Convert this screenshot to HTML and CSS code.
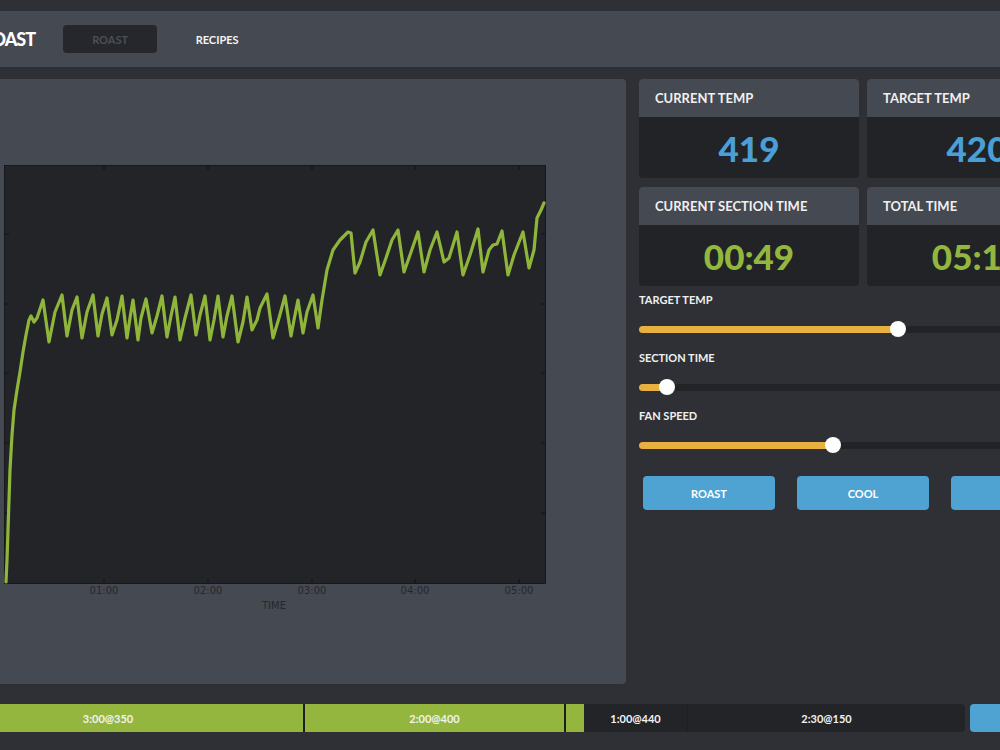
FILE: index.html
```html
<!DOCTYPE html>
<html lang="en">
  <head>
    <meta charset="UTF-8" />
    <meta name="viewport" content="width=device-width, initial-scale=1.0" />
    <title>Roast</title>
    <link rel="stylesheet" href="styles.css">
  </head>
  <body>
    <div class="app">
      <header class="topbar">
        <div class="logo">ROAST</div>
        <nav class="tabs">
          <a class="tab active">ROAST</a>
          <a class="tab">RECIPES</a>
        </nav>
      </header>

      <main class="main">
        <section class="chart-panel">
          <svg class="chart" width="542" height="450" viewBox="4 165 542 450">
            <rect class="plot-bg" x="4.5" y="165.5" width="541" height="418" />
            <path class="ticks" d="M104 166v4M208 166v4M312 166v4M415 166v4M519 166v4
              M104 583v-4M208 583v-4M312 583v-4M415 583v-4M519 583v-4
              M5 234h4M5 304h4M5 373h4M5 443h4M5 513h4
              M545 234h-4M545 304h-4M545 373h-4M545 443h-4M545 513h-4" />
            <polyline class="series" points="6,582 7,560 8,530 9,500 10,470 12,435 14,410 17,390 20,372 23,352 26,335 29,320 31,316 34,322 37,318 43,300 49,342 55,312 62,295 67,336 72,310 77,297 82,338 87,312 93,295 98,336 102,314 107,298 112,335 117,320 122,296 127,338 130,318 133,300 138,340 141,318 146,299 152,333 157,316 162,296 167,337 171,316 175,297 180,340 185,318 191,295 196,335 200,315 205,296 210,340 214,320 218,296 223,337 227,316 232,296 238,342 243,322 247,297 252,330 257,320 260,308 267,294 273,338 279,318 285,296 291,336 294,320 298,300 303,333 307,312 313,295 318,328 322,300 327,270 333,250 340,240 348,232 351,233 355,273 360,262 366,242 373,230 380,275 386,258 392,240 398,230 404,272 410,255 418,232 424,272 430,250 437,232 444,262 449,258 457,232 463,275 470,255 478,229 483,272 489,250 493,245 497,244 502,231 508,275 514,255 523,232 529,268 534,250 537,218 541,210 544,203" />
            <g class="tick-labels">
              <text x="104" y="594">01:00</text>
              <text x="208" y="594">02:00</text>
              <text x="312" y="594">03:00</text>
              <text x="415" y="594">04:00</text>
              <text x="519" y="594">05:00</text>
            </g>
            <text class="axis-title" x="274" y="609">TIME</text>
          </svg>
        </section>

        <aside class="controls">
          <div class="stats">
            <div class="stat">
              <div class="stat-label">CURRENT TEMP</div>
              <div class="stat-value temp">419</div>
            </div>
            <div class="stat">
              <div class="stat-label">TARGET TEMP</div>
              <div class="stat-value temp">420</div>
            </div>
            <div class="stat">
              <div class="stat-label">CURRENT SECTION TIME</div>
              <div class="stat-value time">00:49</div>
            </div>
            <div class="stat">
              <div class="stat-label">TOTAL TIME</div>
              <div class="stat-value time">05:12</div>
            </div>
          </div>

          <div class="sliders">
            <div class="slider">
              <div class="slider-label">TARGET TEMP</div>
              <div class="track" style="--value: 57.8%">
                <div class="rail"><div class="fill"></div></div>
                <div class="thumb"></div>
              </div>
            </div>
            <div class="slider">
              <div class="slider-label">SECTION TIME</div>
              <div class="track" style="--value: 6.3%">
                <div class="rail"><div class="fill"></div></div>
                <div class="thumb"></div>
              </div>
            </div>
            <div class="slider">
              <div class="slider-label">FAN SPEED</div>
              <div class="track" style="--value: 43.3%">
                <div class="rail"><div class="fill"></div></div>
                <div class="thumb"></div>
              </div>
            </div>
          </div>

          <div class="actions">
            <button class="btn">ROAST</button>
            <button class="btn">COOL</button>
            <button class="btn">STOP</button>
          </div>
        </aside>
      </main>

      <footer class="timeline-row">
        <div class="timeline">
          <div class="segment done" style="width: 390px">3:00@350</div>
          <div class="segment done" style="width: 261px">2:00@400</div>
          <div class="segment current" style="width: 123px">
            <span class="progress"></span>
            <span class="segment-label">1:00@440</span>
          </div>
          <div class="segment thin" style="width: 278px">2:30@150</div>
        </div>
        <button class="next-btn"></button>
      </footer>
    </div>
  </body>
</html>
```

FILE: styles.css
```css
* {
  box-sizing: border-box;
  margin: 0;
  padding: 0;
}

body {
  width: 1000px;
  height: 750px;
  overflow: hidden;
  background: #2e3035;
  font-family: Lato, "Open Sans", sans-serif;
  color: #f2f2f2;
}

.app {
  width: 1150px;
  margin-left: -48px;
  padding-top: 11px;
}

/* header */
.topbar {
  height: 56px;
  background: #454952;
  display: flex;
  align-items: center;
  padding-left: 29px;
}

.logo {
  flex: none;
  font-size: 18px;
  font-weight: 900;
  letter-spacing: -1px;
  color: #fff;
}

.tabs {
  display: flex;
  gap: 13px;
  margin-left: 28px;
}

.tab {
  width: 94px;
  height: 28px;
  display: flex;
  align-items: center;
  justify-content: center;
  font-size: 11px;
  font-weight: 700;
  color: #f4f4f4;
  border-radius: 4px;
}

.tab.active {
  background: #25272c;
  color: #4c4f57;
}

/* main area */
.main {
  display: flex;
  gap: 13px;
  margin-top: 12px;
  height: 605px;
}

.chart-panel {
  width: 674px;
  background: #454952;
  border-radius: 0 4px 4px 0;
  padding: 86px 0 0 52px;
}

.chart {
  display: block;
}

.plot-bg {
  fill: #232428;
  stroke: #17181b;
  stroke-width: 1;
}

.ticks {
  stroke: #101113;
  stroke-width: 1;
  fill: none;
}

.series {
  fill: none;
  stroke: #8fb63b;
  stroke-width: 3.2;
  stroke-linejoin: round;
  stroke-linecap: round;
}

.tick-labels text,
.axis-title {
  font-family: "DejaVu Sans", sans-serif;
  font-size: 10px;
  fill: #25272b;
  text-anchor: middle;
}

.controls {
  width: 448px;
  flex: none;
}

.stats {
  display: grid;
  grid-template-columns: 220px 220px;
  gap: 9px 8px;
}

.stat {
  background: #222327;
  border-radius: 4px;
  overflow: hidden;
}

.stat-label {
  height: 38px;
  background: #454952;
  display: flex;
  align-items: center;
  padding-left: 16px;
  font-size: 13px;
  font-weight: 700;
  color: #f0f0f0;
}

.stat-value {
  height: 61px;
  display: flex;
  align-items: center;
  justify-content: center;
  font-size: 35px;
  font-weight: 900;
}

.stat-value.temp {
  color: #4a9fd6;
}

.stat-value.time {
  color: #93b73e;
}

/* sliders */
.sliders {
  padding-top: 7px;
}

.slider-label {
  font-size: 11px;
  font-weight: 700;
  line-height: 14px;
  color: #f0f0f0;
}

.track {
  position: relative;
  height: 16px;
  margin: 14px 0;
  display: flex;
  align-items: center;
}

.rail {
  flex: 1;
  height: 7px;
  background: #222327;
  border-radius: 4px;
  overflow: hidden;
}

.fill {
  height: 100%;
  width: var(--value);
  background: #e8b13f;
}

.thumb {
  position: absolute;
  top: 0;
  left: calc(var(--value) - 8px);
  width: 16px;
  height: 16px;
  border-radius: 50%;
  background: #fff;
}

.actions {
  display: flex;
  gap: 22px;
  padding-left: 4px;
  margin-top: 23px;
}

.btn {
  flex: none;
  width: 132px;
  height: 34px;
  background: #4ea3d3;
  border: none;
  border-radius: 4px;
  color: #fff;
  font-family: Lato, sans-serif;
  font-size: 11px;
  font-weight: 700;
}

/* timeline */
.timeline-row {
  display: flex;
  gap: 5px;
  height: 28px;
  margin-top: 20px;
  margin-left: -39px;
}

.timeline {
  flex: none;
  display: flex;
  width: 1052px;
  background: #232428;
  border-radius: 4px;
  overflow: hidden;
}

.segment {
  flex: none;
  display: flex;
  align-items: center;
  justify-content: center;
  font-size: 11px;
  font-weight: 700;
  color: #f2f2f2;
  border-left: 2px solid #1e1f23;
}

.segment:first-child {
  border-left: none;
}

.segment.thin {
  border-left-width: 1px;
}

.segment.done {
  background: #94b63e;
}

.segment.current {
  justify-content: flex-start;
  align-items: stretch;
}

.progress {
  width: 18px;
  background: #94b63e;
}

.segment-label {
  flex: 1;
  display: flex;
  align-items: center;
  justify-content: center;
}

.next-btn {
  flex: none;
  width: 120px;
  background: #4ea3d3;
  border: none;
  border-radius: 4px;
}
```
